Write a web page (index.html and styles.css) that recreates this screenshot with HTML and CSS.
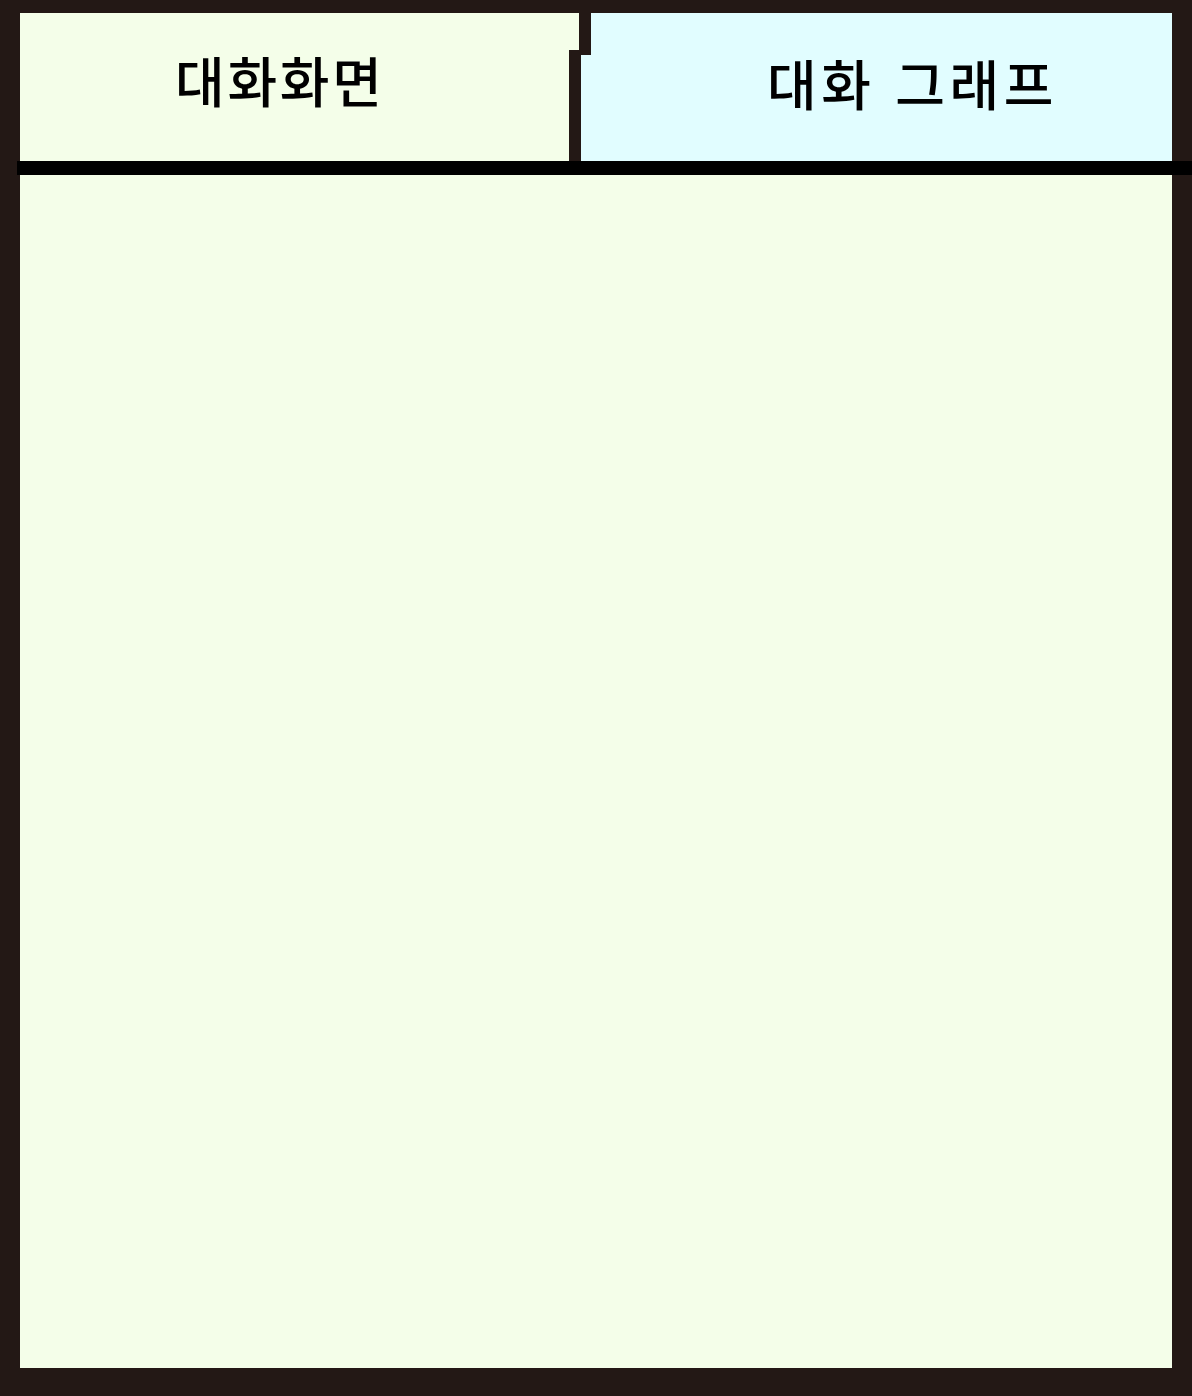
FILE: index.html
```html
<!DOCTYPE html>
<html lang="ko">
<head>
<meta charset="utf-8">
<title>대화화면</title>
<link rel="stylesheet" href="styles.css">
</head>
<body>
<div class="frame">
  <div class="tabs">
    <div class="tab tab-chat"><span class="tab-label label-chat">대화화면</span></div>
    <div class="divider">
      <div class="div-top"></div>
      <div class="div-mid"></div>
      <div class="div-bottom"></div>
    </div>
    <div class="tab tab-graph"><span class="tab-label label-graph">대화 그래프</span></div>
  </div>
  <div class="tab-rule"></div>
  <div class="content"></div>
</div>
</body>
</html>
```
FILE: styles.css
```css
* { box-sizing: border-box; }
html, body { margin: 0; padding: 0; }
body {
  width: 1192px;
  height: 1396px;
  overflow: hidden;
  background: #231815;
  font-family: "Noto Sans CJK KR", "Noto Sans", sans-serif;
}
.frame {
  width: 1192px;
  height: 1396px;
  border-style: solid;
  border-color: #231815;
  border-width: 13px 20px 28px 20px;
  display: flex;
  flex-direction: column;
  background: #f4fee9;
}
.tabs {
  height: 148px;
  display: flex;
  flex-direction: row;
}
.tab {
  height: 100%;
}
.tab-chat {
  width: 549px;
  background: #f4fee9;
  padding: 40px 0 0 155px;
}
.tab-graph {
  flex: 1;
  background: #e1fdff;
  padding: 43px 0 0 176px;
}
.tab-label {
  display: block;
  font-size: 54px;
  line-height: 54px;
  font-weight: 500;
  color: #000;
  white-space: nowrap;
}
.label-chat { letter-spacing: 2.7px; }
.label-graph { letter-spacing: 4.6px; }
.divider {
  width: 22px;
  display: flex;
  flex-direction: column;
}
.div-top {
  height: 37px;
  background: linear-gradient(to right, #f4fee9 0, #f4fee9 10px, #231815 10px, #231815 22px);
}
.div-mid {
  height: 5px;
  background: #231815;
}
.div-bottom {
  flex: 1;
  background: linear-gradient(to right, #231815 0, #231815 12px, #e1fdff 12px, #e1fdff 22px);
}
.tab-rule {
  height: 14px;
  background: #000;
  margin: 0 -20px 0 -3px;
}
.content {
  flex: 1;
  background: #f4fee9;
}
```
